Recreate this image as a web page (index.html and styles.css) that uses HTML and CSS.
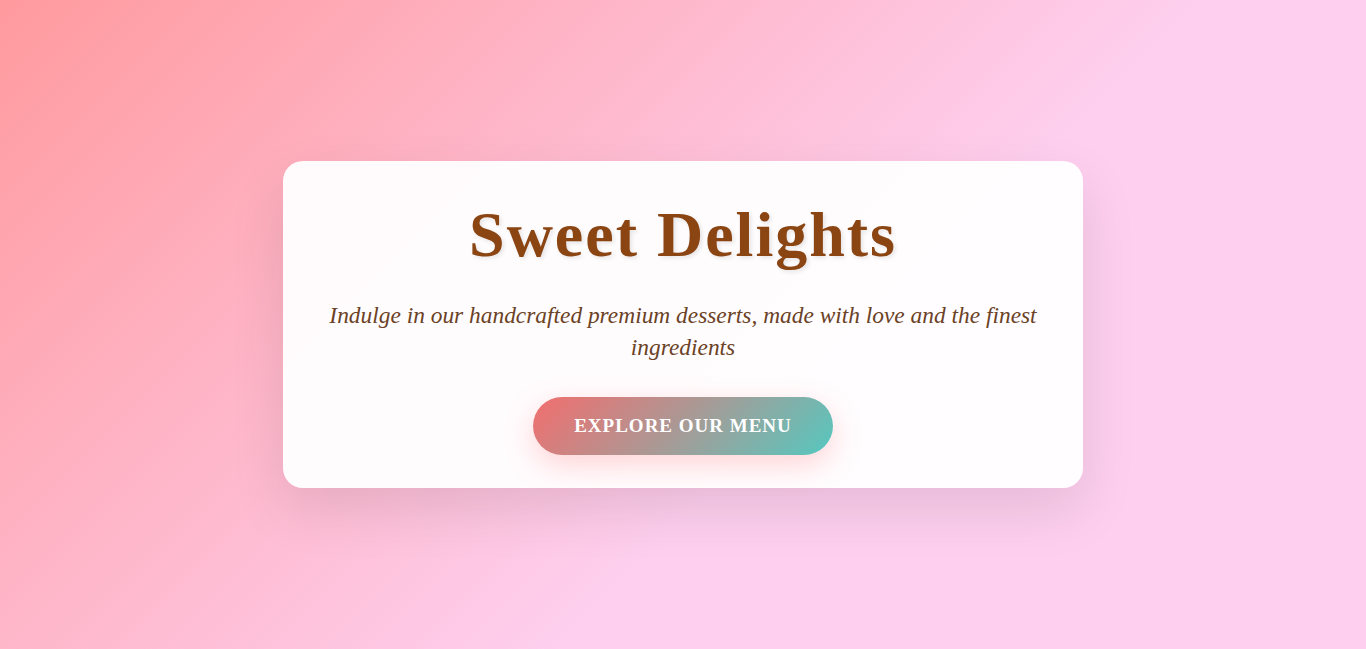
FILE: index.html
```html
<!DOCTYPE html>
<html lang="en">
<head>
<meta charset="utf-8">
<title>Sweet Delights</title>
<link rel="stylesheet" href="styles.css">
</head>
<body>
<main class="page">
  <section class="card">
    <h1 class="title">Sweet Delights</h1>
    <p class="subtitle">Indulge in our handcrafted premium desserts, made with love and the finest ingredients</p>
    <a class="cta" href="#">Explore Our Menu</a>
  </section>
</main>
</body>
</html>
```
FILE: styles.css
```css
* { box-sizing: border-box; }
html, body { margin: 0; padding: 0; height: 100%; }
body {
  font-family: "Liberation Serif", serif;
  background: linear-gradient(135deg, #ff9a9e 0%, #fecfef 60%, #fecfef 100%);
  overflow: hidden;
}
.page {
  height: 100vh;
  display: flex;
  align-items: center;
  justify-content: center;
}
.card {
  width: 800px;
  background: rgba(255, 255, 255, 0.95);
  border-radius: 20px;
  padding: 37px 32px 33px;
  text-align: center;
  box-shadow: 0 22px 55px rgba(0, 0, 0, 0.1);
}
.title {
  margin: 0 0 27px;
  font-size: 64px;
  font-weight: bold;
  line-height: 74px;
  letter-spacing: 2px;
  color: #8b4513;
  text-shadow: 2px 2px 4px rgba(0, 0, 0, 0.1);
}
.subtitle {
  margin: 0 0 34px;
  font-size: 23.4px;
  font-style: italic;
  line-height: 32px;
  color: #6b4226;
}
.cta {
  display: block;
  width: 300px;
  height: 58px;
  margin: 0 auto;
  line-height: 58px;
  border-radius: 29px;
  background: linear-gradient(135deg, #f26e6e 0%, #a89a96 50%, #55c8bf 100%);
  color: #fff;
  font-size: 19px;
  font-weight: bold;
  text-transform: uppercase;
  letter-spacing: 1px;
  text-decoration: none;
  box-shadow: 0 10px 30px rgba(255, 107, 107, 0.28);
}
```
